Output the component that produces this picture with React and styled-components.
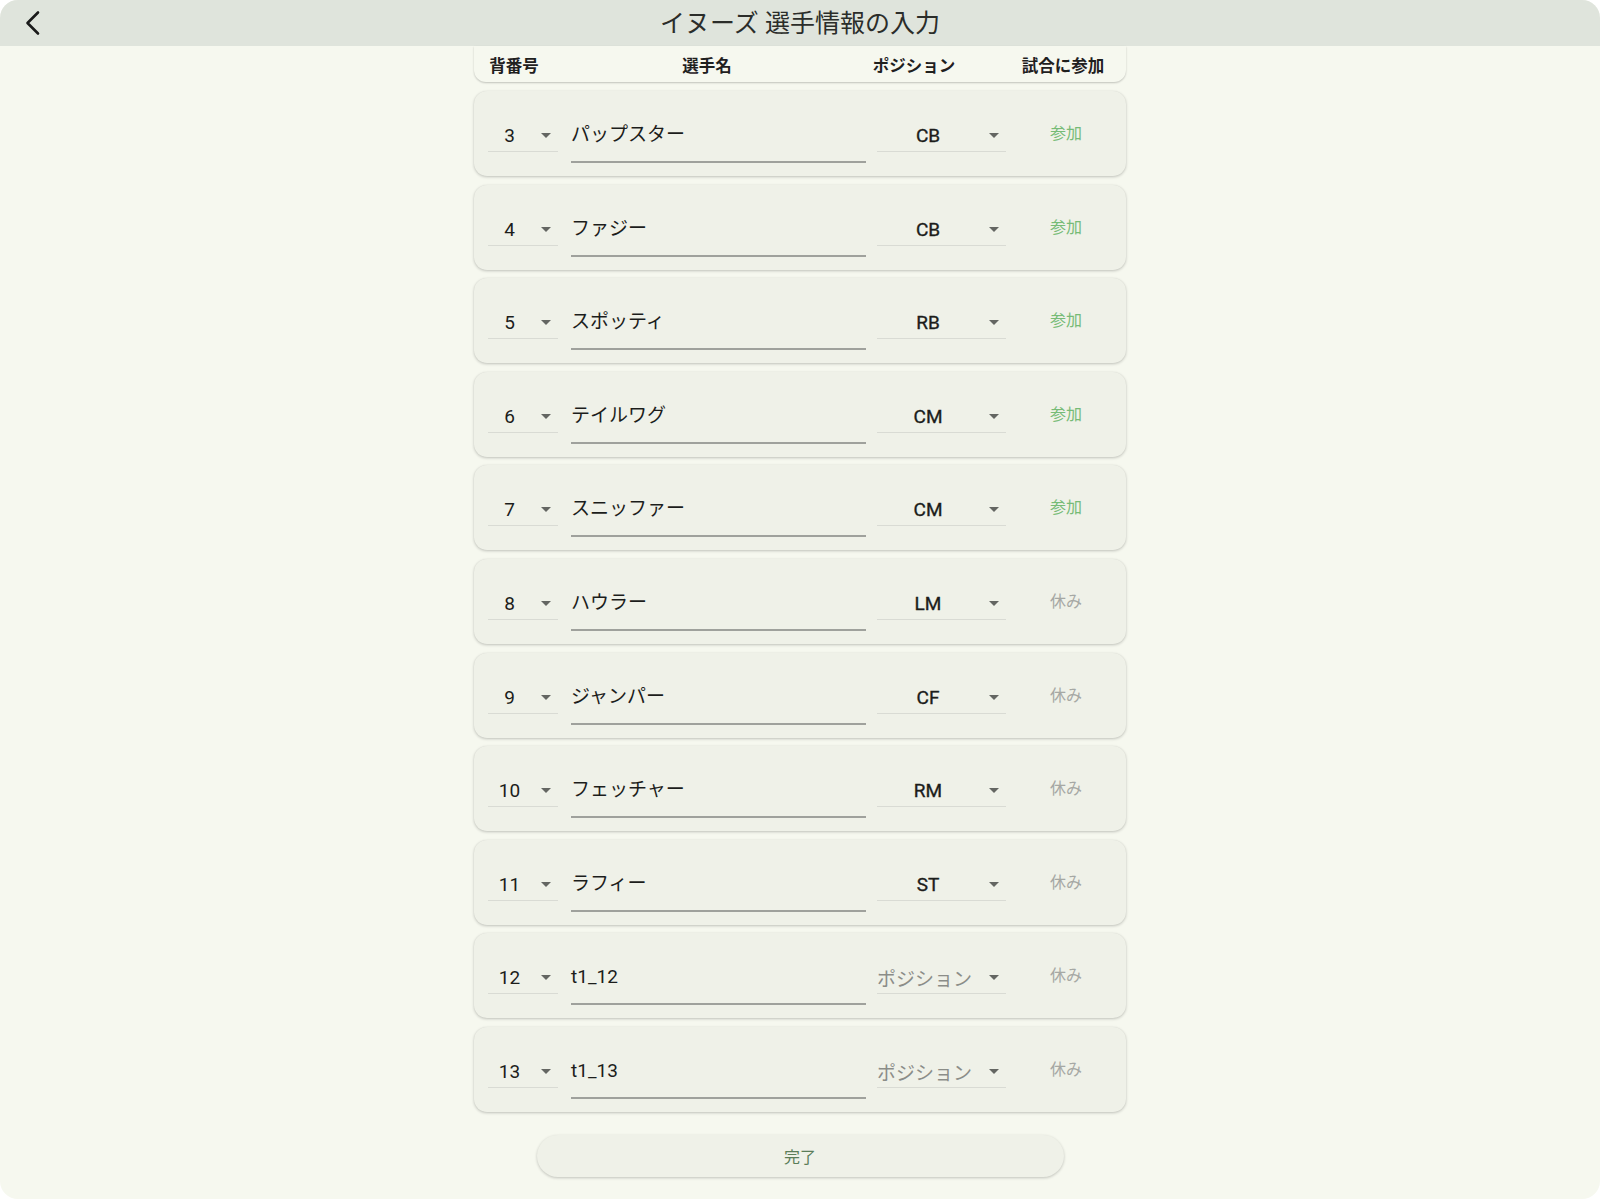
import React from "react";
import styled, { createGlobalStyle } from "styled-components";

const GlobalStyle = createGlobalStyle`
  html, body {
    margin: 0;
    padding: 0;
    background: #ffffff;
  }
  * {
    box-sizing: border-box;
  }
`;

const font = `Roboto, "Noto Sans CJK JP", sans-serif`;

const Screen = styled.div`
  width: 1600px;
  height: 1199px;
  border-radius: 18px;
  overflow: hidden;
  background: #f6f8ef;
  font-family: ${font};
  display: flex;
  flex-direction: column;
`;

const AppBar = styled.header`
  height: 46px;
  flex-shrink: 0;
  background: #dfe4dc;
  display: grid;
  grid-template-columns: 1fr auto 1fr;
  align-items: center;
`;

const BackButton = styled.button`
  justify-self: start;
  margin-left: 24px;
  padding: 0;
  border: none;
  background: none;
  display: flex;
  align-items: center;
  cursor: pointer;
`;

const Title = styled.h1`
  margin: 0;
  padding-top: 2px;
  font-size: 25px;
  font-weight: 400;
  color: #2b2d2a;
  line-height: 44px;
  white-space: nowrap;
`;

const Content = styled.main`
  display: flex;
  flex-direction: column;
  align-items: center;
`;

const HeaderCard = styled.div`
  width: 652px;
  height: 36px;
  background: #f6f8ef;
  border-radius: 0 0 12px 12px;
  box-shadow: 0 1px 2px rgba(0, 0, 0, 0.22);
  display: grid;
  grid-template-columns: 80px 306px 108px 1fr;
  padding-top: 9px;
`;

const HeaderCell = styled.div`
  text-align: center;
  font-size: 16.5px;
  font-weight: 700;
  line-height: 24px;
  color: #1f201e;
  padding-left: ${(p) => p.$pad || 0}px;
  white-space: nowrap;
`;

const List = styled.div`
  margin-top: 9px;
  display: flex;
  flex-direction: column;
  gap: 8.6px;
`;

const RowCard = styled.div`
  width: 652px;
  height: 85px;
  background: #eff1e8;
  border-radius: 13px;
  box-shadow: 0 1px 3px rgba(0, 0, 0, 0.22), 0 0 1px rgba(0, 0, 0, 0.08);
  display: flex;
  align-items: flex-start;
  padding: 29px 0 0 14px;
`;

const Select = styled.div`
  width: ${(p) => p.$w}px;
  height: 32px;
  margin-right: ${(p) => p.$mr || 0}px;
  border-bottom: 1px solid #d9dbd4;
  display: flex;
  align-items: center;
`;

const SelectValue = styled.span`
  flex: 1;
  text-align: center;
  padding-right: 3px;
  font-size: 19px;
  font-weight: 400;
  color: #1c1d1b;
  -webkit-text-stroke: ${(p) => (p.$medium ? "0.35px #1c1d1b" : "0")};
  white-space: nowrap;
`;

const Placeholder = styled.span`
  flex: 1;
  text-align: left;
  font-size: 19px;
  color: #8b8d88;
  white-space: nowrap;
`;

const Arrow = styled.span`
  width: 24px;
  height: 24px;
  display: flex;
  align-items: center;
  justify-content: center;
  flex-shrink: 0;
`;

const NameField = styled.div`
  width: 295px;
  height: 43px;
  margin-right: 11px;
  border-bottom: 2px solid #9fa19c;
  font-size: 19px;
  line-height: 29px;
  color: #1c1d1b;
  white-space: nowrap;
`;

const Status = styled.div`
  flex: 1;
  text-align: center;
  font-size: 16px;
  line-height: 28px;
  color: ${(p) => (p.$on ? "#76bb76" : "#a6a8a4")};
`;

const DoneButton = styled.button`
  margin-top: 23px;
  width: 527px;
  height: 42px;
  border: none;
  border-radius: 21px;
  background: #eff1e8;
  box-shadow: 0 1px 3px rgba(0, 0, 0, 0.22);
  font-family: ${font};
  font-size: 16px;
  color: #5b7d58;
  cursor: pointer;
`;

const players = [
  { no: 3, name: "パップスター", pos: "CB", on: true },
  { no: 4, name: "ファジー", pos: "CB", on: true },
  { no: 5, name: "スポッティ", pos: "RB", on: true },
  { no: 6, name: "テイルワグ", pos: "CM", on: true },
  { no: 7, name: "スニッファー", pos: "CM", on: true },
  { no: 8, name: "ハウラー", pos: "LM", on: false },
  { no: 9, name: "ジャンパー", pos: "CF", on: false },
  { no: 10, name: "フェッチャー", pos: "RM", on: false },
  { no: 11, name: "ラフィー", pos: "ST", on: false },
  { no: 12, name: "t1_12", pos: null, on: false },
  { no: 13, name: "t1_13", pos: null, on: false },
];

function DropArrow() {
  return (
    <Arrow>
      <svg width="10" height="5" viewBox="0 0 10 5">
        <path d="M0 0 L10 0 L5 5 Z" fill="#646662" />
      </svg>
    </Arrow>
  );
}

function PlayerRow({ player }) {
  return (
    <RowCard>
      <Select $w={70} $mr={13}>
        <SelectValue>{player.no}</SelectValue>
        <DropArrow />
      </Select>
      <NameField>{player.name}</NameField>
      <Select $w={129}>
        {player.pos ? (
          <SelectValue $medium>{player.pos}</SelectValue>
        ) : (
          <Placeholder>ポジション</Placeholder>
        )}
        <DropArrow />
      </Select>
      <Status $on={player.on}>{player.on ? "参加" : "休み"}</Status>
    </RowCard>
  );
}

export default function App() {
  return (
    <>
      <GlobalStyle />
      <Screen>
        <AppBar>
          <BackButton aria-label="back">
            <svg width="18" height="26" viewBox="0 0 18 26">
              <polyline
                points="14,2.5 3.5,13 14,23.5"
                fill="none"
                stroke="#1a1a1a"
                strokeWidth="2.6"
                strokeLinecap="round"
                strokeLinejoin="round"
              />
            </svg>
          </BackButton>
          <Title>イヌーズ 選手情報の入力</Title>
          <div />
        </AppBar>
        <Content>
          <HeaderCard>
            <HeaderCell>背番号</HeaderCell>
            <HeaderCell>選手名</HeaderCell>
            <HeaderCell>ポジション</HeaderCell>
            <HeaderCell $pad={32}>試合に参加</HeaderCell>
          </HeaderCard>
          <List>
            {players.map((p) => (
              <PlayerRow key={p.no} player={p} />
            ))}
          </List>
          <DoneButton>完了</DoneButton>
        </Content>
      </Screen>
    </>
  );
}
